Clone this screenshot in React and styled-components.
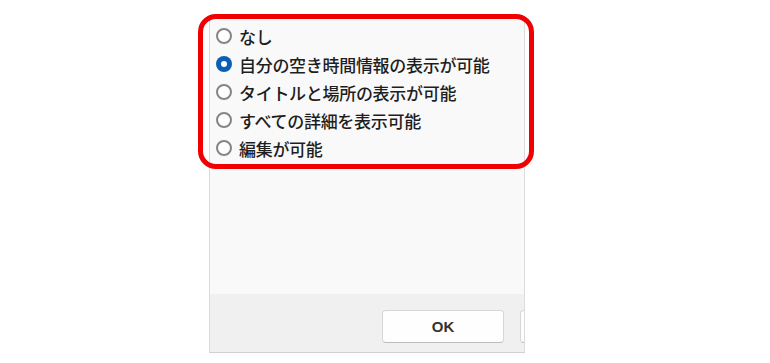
import React, { useState } from "react";
import styled, { createGlobalStyle } from "styled-components";

const Global = createGlobalStyle`
  html, body { margin: 0; padding: 0; background: #ffffff; }
  body { font-family: "Noto Sans CJK JP", "Noto Sans", sans-serif; }
`;

const Page = styled.div`
  width: 770px;
  height: 363px;
  padding: 18px 0 0 209px;
  box-sizing: border-box;
  overflow: hidden;
`;

const Panel = styled.div`
  position: relative;
  width: 316px;
  height: 335px;
  box-sizing: border-box;
  display: flex;
  flex-direction: column;
  background: #f9f9f9;
  border-top: 1px solid #e6e6e6;
  border-left: 1px solid #dcdcdc;
  border-right: 1px solid #dcdcdc;
  border-bottom: 1px solid #cfcfcf;
`;

const Options = styled.div`
  display: flex;
  flex-direction: column;
  padding: 3px 0 0 6px;
  flex: 1;
`;

const Row = styled.label`
  display: flex;
  align-items: center;
  height: 28px;
  gap: 7px;
  cursor: pointer;
  font-size: 17px;
  font-weight: 500;
  color: #1e1e1e;
  letter-spacing: -0.3px;
  white-space: nowrap;
`;

const Radio = styled.span`
  width: 16px;
  height: 16px;
  box-sizing: border-box;
  border-radius: 50%;
  flex: none;
  display: flex;
  align-items: center;
  justify-content: center;
  border: ${(p) => (p.$checked ? "none" : "2px solid #858585")};
  background: ${(p) => (p.$checked ? "#0a5fb4" : "#fdfdfd")};
  &::after {
    content: "";
    display: ${(p) => (p.$checked ? "block" : "none")};
    width: 6px;
    height: 6px;
    border-radius: 50%;
    background: #fff;
  }
`;

const Footer = styled.div`
  height: 58px;
  background: #f0f0f0;
  display: flex;
  gap: 16px;
  padding: 16px 0 0 172px;
  box-sizing: border-box;
  overflow: hidden;
`;

const Button = styled.button`
  flex: none;
  width: 122px;
  height: 33px;
  background: #fefefe;
  border: 1px solid #d6d6d6;
  border-bottom-color: #bdbdbd;
  border-radius: 4px;
  font-family: "Liberation Sans", "Noto Sans", sans-serif;
  font-weight: 700;
  font-size: 15px;
  color: #333;
  cursor: pointer;
`;

const Highlight = styled.div`
  position: absolute;
  left: -12px;
  top: -5px;
  width: 336px;
  height: 155px;
  box-sizing: border-box;
  border: 5px solid #f00000;
  border-radius: 18px;
  pointer-events: none;
`;

const options = [
  "なし",
  "自分の空き時間情報の表示が可能",
  "タイトルと場所の表示が可能",
  "すべての詳細を表示可能",
  "編集が可能",
];

export default function App() {
  const [sel, setSel] = useState(1);
  return (
    <>
      <Global />
      <Page>
        <Panel>
          <Options>
            {options.map((o, i) => (
              <Row key={o} onClick={() => setSel(i)}>
                <Radio $checked={sel === i} />
                {o}
              </Row>
            ))}
          </Options>
          <Footer>
            <Button>OK</Button>
            <Button aria-label="キャンセル" />
          </Footer>
          <Highlight />
        </Panel>
      </Page>
    </>
  );
}
